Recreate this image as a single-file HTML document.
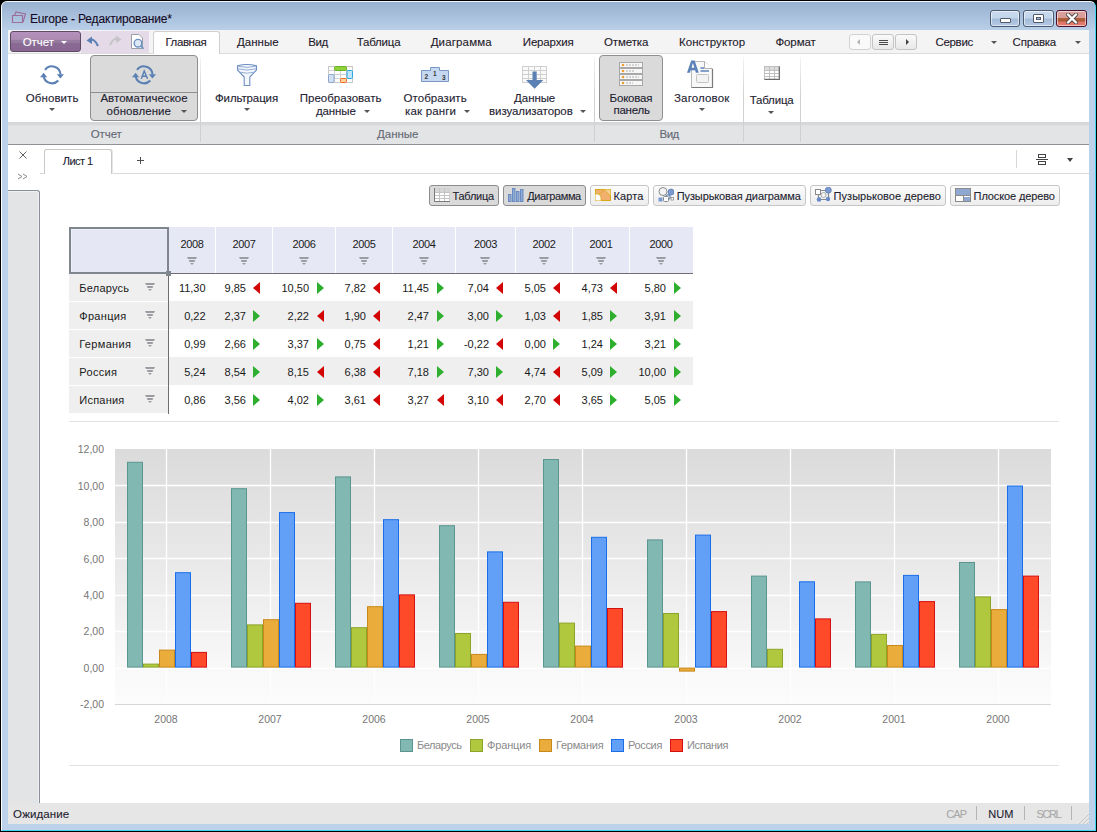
<!DOCTYPE html>
<html><head><meta charset="utf-8">
<style>
*{margin:0;padding:0;box-sizing:border-box}
html,body{width:1097px;height:832px;overflow:hidden;background:#000;font-family:"Liberation Sans",sans-serif;}
.a{position:absolute}
.t{position:absolute;white-space:nowrap;-webkit-text-stroke:0.1px currentColor}
.dd{position:absolute;width:0;height:0;border-left:3px solid transparent;border-right:3px solid transparent;border-top:3px solid #555}
.sep{position:absolute;width:1px;background:linear-gradient(rgba(210,211,213,0.25),#d0d1d3 45%,#cfd0d2)}
.pressed{position:absolute;background:#dadada;border:1px solid #8f8f8f;border-radius:4px}
.wb{position:absolute;top:10px;height:17px;border:1px solid #4b5a70;border-radius:3px;background:linear-gradient(#c9daef 0,#c3d5ec 48%,#a4bbd8 52%,#b3c9e4 100%);box-shadow:inset 0 0 0 1px rgba(255,255,255,.55)}
</style></head><body>
<div class="a" style="left:0;top:0;width:1097px;height:832px;background:#000"></div>
<div class="a" style="left:1px;top:1px;width:1095px;height:830px;background:#bcd1ea;border-radius:6px 6px 0 0;border-left:1px solid #fff;border-top:1px solid #f4f8fc;border-right:1px solid #3fd6ef;border-bottom:1px solid #3fd6ef"></div>
<div class="a" style="left:2px;top:2px;width:1093px;height:28px;background:linear-gradient(#98b1d0,#b9cfe8);border-radius:5px 5px 0 0"></div>

<svg class="a" style="left:11px;top:11px" width="16" height="13" viewBox="0 0 16 13"><path d="M1.5 4.5 L1.5 11.5 L11.5 11.5 L11.5 4.5 Z" fill="none" stroke="#9b6e9c" stroke-width="1.2"/><path d="M3.5 4.5 L5 1 L14.5 3 L12 11" fill="none" stroke="#9b6e9c" stroke-width="1.2"/></svg>
<div class="t" style="left:30.00px;top:13.00px;font-size:12px;line-height:12px;color:#140a24;letter-spacing:-0.152px">Europe - Редактирование*</div>
<div class="wb" style="left:990px;width:30px"></div>
<div class="a" style="left:1000px;top:18px;width:11px;height:5px;background:#fff;border:1px solid #505a68;border-radius:1px"></div>
<div class="wb" style="left:1023px;width:31px"></div>
<div class="a" style="left:1033px;top:14px;width:11px;height:9px;background:#fff;border:1px solid #505a68;border-radius:1px"></div>
<div class="a" style="left:1036px;top:17px;width:5px;height:3px;background:#a8bcd8;border:1px solid #505a68"></div>
<div class="wb" style="left:1056px;width:31px;border-color:#4a0f2a;background:linear-gradient(#dca39f 0,#d99b96 45%,#b0603a 50%,#a85a34 68%,#e07366 72%,#e47a6c 100%)"></div>
<svg class="a" style="left:1066px;top:13px" width="12" height="11" viewBox="0 0 12 11"><path d="M2 1.5 L10 9.5 M10 1.5 L2 9.5" stroke="#4a4a4a" stroke-width="4" stroke-linecap="round"/><path d="M2 1.5 L10 9.5 M10 1.5 L2 9.5" stroke="#fff" stroke-width="2.4" stroke-linecap="round"/></svg>
<div class="a" style="left:8px;top:30px;width:1081px;height:24px;background:#f4f4f4;border-bottom:1px solid #dcdcdc"></div>
<div class="a" style="left:10px;top:31px;width:71px;height:21px;border:1px solid #5e4a66;border-radius:3px;background:linear-gradient(#b592be 0,#ab8aaf 40%,#957aa0 45%,#957aa0 55%,#8a6a94 60%,#886892 100%)"></div>
<div class="t" style="left:22.70px;top:37.00px;font-size:11.5px;line-height:11.5px;color:#fff;letter-spacing:-0.057px">Отчет</div>
<div class="dd" style="left:61px;top:41px;border-top-color:#fff"></div>
<div class="a" style="left:81px;top:31px;width:68px;height:22px;background:#e4dae8"></div>
<svg class="a" style="left:86px;top:35px" width="14" height="13" viewBox="0 0 14 13"><path d="M3 5 Q8 2.5 12 11" fill="none" stroke="#5a7fb4" stroke-width="2"/><path d="M0.5 5.5 L6 1.5 L6 9 Z" fill="#5a7fb4"/></svg>
<svg class="a" style="left:108px;top:34px" width="14" height="13" viewBox="0 0 14 13"><path d="M11 5 Q6 2.5 2 11" fill="none" stroke="#c4c4c8" stroke-width="2"/><path d="M13.5 5.5 L8 1.5 L8 9 Z" fill="#c4c4c8"/></svg>
<svg class="a" style="left:130px;top:34px" width="14" height="16" viewBox="0 0 14 16"><path d="M1.5 0.5 L9 0.5 L12.5 4 L12.5 14.5 L1.5 14.5 Z" fill="#fff" stroke="#9aa0a8"/><circle cx="8" cy="9.2" r="3.8" fill="#dfe9f5" stroke="#6a90c4" stroke-width="1.4"/><path d="M10.7 11.9 L13.5 14.7" stroke="#6a90c4" stroke-width="1.6"/></svg>
<div class="a" style="left:153px;top:31px;width:67px;height:24px;background:#fff;border:1px solid #d0d0d0;border-bottom:none;border-radius:3px 3px 0 0"></div>
<div class="t" style="left:165.40px;top:37.00px;font-size:11.5px;line-height:11.5px;color:#1e1a2a;letter-spacing:-0.396px">Главная</div>
<div class="t" style="left:237.00px;top:37.00px;font-size:11.5px;line-height:11.5px;color:#1e1a2a;letter-spacing:0.009px">Данные</div>
<div class="t" style="left:308.20px;top:37.00px;font-size:11.5px;line-height:11.5px;color:#1e1a2a;letter-spacing:-0.335px">Вид</div>
<div class="t" style="left:356.80px;top:37.00px;font-size:11.5px;line-height:11.5px;color:#1e1a2a;letter-spacing:-0.227px">Таблица</div>
<div class="t" style="left:430.70px;top:37.00px;font-size:11.5px;line-height:11.5px;color:#1e1a2a;letter-spacing:0.144px">Диаграмма</div>
<div class="t" style="left:522.80px;top:37.00px;font-size:11.5px;line-height:11.5px;color:#1e1a2a;letter-spacing:-0.178px">Иерархия</div>
<div class="t" style="left:604.00px;top:37.00px;font-size:11.5px;line-height:11.5px;color:#1e1a2a;letter-spacing:-0.111px">Отметка</div>
<div class="t" style="left:678.90px;top:37.00px;font-size:11.5px;line-height:11.5px;color:#1e1a2a;letter-spacing:0.076px">Конструктор</div>
<div class="t" style="left:775.40px;top:37.00px;font-size:11.5px;line-height:11.5px;color:#1e1a2a;letter-spacing:-0.092px">Формат</div>
<div class="t" style="left:935.40px;top:37.00px;font-size:11.5px;line-height:11.5px;color:#1e1a2a;letter-spacing:-0.297px">Сервис</div>
<div class="t" style="left:1012.60px;top:37.00px;font-size:11.5px;line-height:11.5px;color:#1e1a2a;letter-spacing:-0.245px">Справка</div>
<div class="a" style="left:849px;top:34px;width:22px;height:16px;border:1px solid #d2d2d2;border-radius:3px;background:#fafafa"></div>
<div class="a" style="left:872px;top:34px;width:22px;height:16px;border:1px solid #c4c4c4;border-radius:3px;background:linear-gradient(#fafafa,#e8e8e8)"></div>
<div class="a" style="left:895px;top:34px;width:22px;height:16px;border:1px solid #c4c4c4;border-radius:3px;background:linear-gradient(#fafafa,#e8e8e8)"></div>
<div class="a" style="left:857px;top:39px;width:0;height:0;border-top:3px solid transparent;border-bottom:3px solid transparent;border-right:3px solid #b4b4b4"></div>
<div class="a" style="left:879px;top:40px;width:9px;height:1px;background:#484848;box-shadow:0 2px 0 #484848,0 4px 0 #484848"></div>
<div class="a" style="left:906px;top:39px;width:0;height:0;border-top:3px solid transparent;border-bottom:3px solid transparent;border-left:3px solid #404040"></div>
<div class="dd" style="left:991px;top:41px"></div>
<div class="dd" style="left:1075px;top:41px"></div>
<div class="a" style="left:8px;top:54px;width:1081px;height:68px;background:#fff"></div>
<div class="a" style="left:8px;top:122px;width:1081px;height:23px;background:linear-gradient(#d4d5d7 0,#d9dadc 3px,#e3e4e6 4px,#e3e4e6 100%);border-bottom:1px solid #8e9196"></div>
<div class="sep" style="left:200px;top:57px;height:85px"></div>
<div class="sep" style="left:594px;top:57px;height:85px"></div>
<div class="sep" style="left:743px;top:57px;height:85px"></div>
<div class="sep" style="left:800px;top:57px;height:85px"></div>
<div class="t" style="left:90.70px;top:129.00px;font-size:11.5px;line-height:11.5px;color:#646874;letter-spacing:-0.077px">Отчет</div>
<div class="t" style="left:377.10px;top:129.00px;font-size:11.5px;line-height:11.5px;color:#646874;letter-spacing:-0.041px">Данные</div>
<div class="t" style="left:659.60px;top:129.00px;font-size:11.5px;line-height:11.5px;color:#646874;letter-spacing:-0.535px">Вид</div>
<svg class="a" style="left:40px;top:64px" width="24" height="22" viewBox="0 0 24 22">
<path d="M5.04 5.92 A8.5 8.5 0 0 1 20.5 10.5" fill="none" stroke="#5a80b4" stroke-width="2.1"/>
<path d="M16.8 10.2 L24 10.2 L20.4 14.6 Z" fill="#5a80b4"/>
<path d="M18.3 16.5 A8.5 8.5 0 0 1 3.74 12.8" fill="none" stroke="#5a80b4" stroke-width="2.1"/>
<path d="M0 13.2 L7.2 13.2 L3.6 8.8 Z" fill="#5a80b4"/></svg>
<div class="t" style="left:25.70px;top:93.00px;font-size:11.5px;line-height:11.5px;color:#222230;letter-spacing:0.104px">Обновить</div>
<div class="dd" style="left:49px;top:108px"></div>
<div class="pressed" style="left:90px;top:55px;width:108px;height:66px"></div>
<div class="a" style="left:91px;top:92px;width:106px;height:1px;background:#8f8f8f"></div>
<svg class="a" style="left:132px;top:64px" width="24" height="22" viewBox="0 0 24 22">
<path d="M5.04 5.92 A8.5 8.5 0 0 1 20.5 10.5" fill="none" stroke="#5a80b4" stroke-width="2.1"/>
<path d="M16.8 10.2 L24 10.2 L20.4 14.6 Z" fill="#5a80b4"/>
<path d="M18.3 16.5 A8.5 8.5 0 0 1 3.74 12.8" fill="none" stroke="#5a80b4" stroke-width="2.1"/>
<path d="M0 13.2 L7.2 13.2 L3.6 8.8 Z" fill="#5a80b4"/>
<path d="M9.3 14.8 L12.2 7 L15.5 14.8 M10.3 12.2 H14.5" fill="none" stroke="#5a80b4" stroke-width="1.5"/></svg>
<div class="t" style="left:100.40px;top:93.00px;font-size:11.5px;line-height:11.5px;color:#222230;letter-spacing:0.029px">Автоматическое</div>
<div class="t" style="left:106.60px;top:106.00px;font-size:11.5px;line-height:11.5px;color:#222230;letter-spacing:0.055px">обновление</div>
<div class="dd" style="left:181px;top:110px"></div>
<svg class="a" style="left:236px;top:63px" width="22" height="24" viewBox="0 0 22 24">
<path d="M1.5 2.8 Q11 0.2 20.5 2.8 V7 L13.8 14 V22.5 H8.2 V14 L1.5 7 Z" fill="#f4f7fc" stroke="#6d8fc2" stroke-width="1.1"/>
<path d="M1.8 3.2 Q11 5.6 20.2 3.2 M2 5.8 Q11 8.4 20 5.8 M4.2 9.2 Q11 11.2 17.8 9.2" fill="none" stroke="#8aa6d0" stroke-width="0.9"/>
</svg>
<div class="t" style="left:215.00px;top:93.00px;font-size:11.5px;line-height:11.5px;color:#222230;letter-spacing:-0.127px">Фильтрация</div>
<div class="dd" style="left:244px;top:108px"></div>
<svg class="a" style="left:328px;top:66px" width="26" height="17" viewBox="0 0 26 17">
<rect x="0.5" y="0.5" width="24" height="16" fill="#fff" stroke="#c8c8c8"/>
<path d="M6.5 0.5 V16.5 M12.5 0.5 V16.5 M18.5 0.5 V16.5 M0.5 4.5 H24.5 M0.5 8.5 H24.5 M0.5 12.5 H24.5" stroke="#d0d0d0" stroke-width="1"/>
<rect x="6.5" y="0.5" width="12" height="4" rx="1" fill="#8fd23a" stroke="#6cb02a"/>
<rect x="19" y="4.5" width="5.5" height="8" rx="1" fill="#bfe6fa" stroke="#2aa6e0"/>
<rect x="0.5" y="8.5" width="5.5" height="8" rx="1" fill="#d2e0f2" stroke="#8aa6cc"/>
<rect x="12.5" y="12.5" width="6" height="4" rx="1" fill="#fbd3a0" stroke="#f06a20"/></svg>
<div class="t" style="left:299.70px;top:93.00px;font-size:11.5px;line-height:11.5px;color:#222230;letter-spacing:0.014px">Преобразовать</div>
<div class="t" style="left:315.90px;top:106.00px;font-size:11.5px;line-height:11.5px;color:#222230;letter-spacing:-0.111px">данные</div>
<div class="dd" style="left:364px;top:110px"></div>
<svg class="a" style="left:421px;top:67px" width="28" height="15" viewBox="0 0 28 15">
<path d="M0.5 3.5 H9.5 V0.5 H18.5 V3.5 H27.5 V14.5 H0.5 Z" fill="#c6d8f0" stroke="#7a98c4"/>
<text x="3.5" y="12" font-family="Liberation Sans" font-weight="bold" font-size="6.5" fill="#3a3a3a">2</text>
<text x="12" y="8.5" font-family="Liberation Sans" font-weight="bold" font-size="6.5" fill="#3a3a3a">1</text>
<text x="21" y="13" font-family="Liberation Sans" font-weight="bold" font-size="6.5" fill="#3a3a3a">3</text></svg>
<div class="t" style="left:403.60px;top:93.00px;font-size:11.5px;line-height:11.5px;color:#222230;letter-spacing:0.042px">Отобразить</div>
<div class="t" style="left:405.10px;top:106.00px;font-size:11.5px;line-height:11.5px;color:#222230;letter-spacing:0.159px">как ранги</div>
<div class="dd" style="left:464px;top:110px"></div>
<svg class="a" style="left:522px;top:66px" width="25" height="23" viewBox="0 0 25 23">
<rect x="0.5" y="0.5" width="24" height="16" fill="#fafafa" stroke="#cfcfcf"/>
<path d="M6.5 0.5 V16.5 M12.5 0.5 V16.5 M18.5 0.5 V16.5 M0.5 4.5 H24.5 M0.5 8.5 H24.5 M0.5 12.5 H24.5" stroke="#cfcfcf" stroke-width="1"/>
<path d="M10.5 5.5 H14.7 V14 H21.3 L12.6 22.8 L4 14 H10.5 Z" fill="#5a80b4"/></svg>
<div class="t" style="left:514.10px;top:93.00px;font-size:11.5px;line-height:11.5px;color:#222230;letter-spacing:-0.075px">Данные</div>
<div class="t" style="left:489.00px;top:106.00px;font-size:11.5px;line-height:11.5px;color:#222230;letter-spacing:-0.070px">визуализаторов</div>
<div class="dd" style="left:580px;top:110px"></div>
<div class="pressed" style="left:599px;top:55px;width:64px;height:66px"></div>
<svg class="a" style="left:619px;top:62px" width="25" height="25" viewBox="0 0 25 25">
<g fill="#f6f6f6" stroke="#a8a8a8"><rect x="0.5" y="0.5" width="23" height="5"/><rect x="0.5" y="6.5" width="23" height="5"/><rect x="0.5" y="12.5" width="23" height="5"/><rect x="0.5" y="18.5" width="23" height="5"/></g>
<g fill="#f0a030"><circle cx="4" cy="3" r="1.3"/><circle cx="4" cy="9" r="1.3"/><circle cx="4" cy="15" r="1.3"/><circle cx="4" cy="21" r="1.3"/></g>
<g stroke="#b0b0b0" stroke-dasharray="2 1"><path d="M7 3 H20"/><path d="M7 9 H16"/><path d="M7 15 H20"/><path d="M7 21 H14"/></g></svg>
<div class="t" style="left:609.60px;top:93.00px;font-size:11.5px;line-height:11.5px;color:#222230;letter-spacing:-0.200px">Боковая</div>
<div class="t" style="left:613.40px;top:105.00px;font-size:11.5px;line-height:11.5px;color:#222230;letter-spacing:-0.215px">панель</div>
<svg class="a" style="left:686px;top:60px" width="28" height="29" viewBox="0 0 28 29">
<path d="M5.5 1.5 H18.5 L26.5 9 V27.5 H5.5 Z" fill="#f8f8f8" stroke="#b8b8b8"/>
<path d="M26.5 9 V27.5 H5.5" fill="none" stroke="#7a7a7a" stroke-width="1.2"/>
<path d="M18.5 1.5 V8.5 H26.5" fill="#fff" stroke="#b0b0b0"/>
<rect x="10.5" y="14.5" width="12" height="8" rx="1" fill="#f2f2f2" stroke="#c4c4c4"/>
<path fill-rule="evenodd" d="M1 12.8 L5.2 0.4 H8.6 L12.8 12.8 H9.9 L9.1 10.2 H4.7 L3.9 12.8 Z M5.4 7.8 H8.4 L6.9 3 Z" fill="#5b82b8"/>
<path d="M14.5 8 H18 M14.5 11 H23" stroke="#5b82b8" stroke-width="1.5"/></svg>
<div class="t" style="left:674.00px;top:93.00px;font-size:11.5px;line-height:11.5px;color:#222230;letter-spacing:0.159px">Заголовок</div>
<div class="dd" style="left:699px;top:108px"></div>
<svg class="a" style="left:764px;top:66px" width="16" height="14" viewBox="0 0 16 14">
<rect x="0.5" y="0.5" width="15" height="13" fill="#fff" stroke="#c0c0c0"/>
<rect x="1" y="1" width="14" height="3.5" fill="#dcdcdc"/>
<path d="M5.5 0.5 V13.5 M10.5 0.5 V13.5 M0.5 4.5 H15.5 M0.5 7.5 H15.5 M0.5 10.5 H15.5" stroke="#c0c0c0"/>
<path d="M15.3 0.5 V13.3 H0.5" fill="none" stroke="#6a6a6a" stroke-width="1.2"/></svg>
<div class="t" style="left:749.70px;top:95.00px;font-size:11.5px;line-height:11.5px;color:#222230;letter-spacing:-0.184px">Таблица</div>
<div class="dd" style="left:768px;top:111px"></div>
<div class="a" style="left:8px;top:145px;width:1081px;height:658px;background:#fff"></div>
<div class="a" style="left:40px;top:173px;width:1049px;height:1px;background:#d9d9d9"></div>
<div class="a" style="left:44px;top:149px;width:68px;height:25px;background:#fff;border:1px solid #c8c8c8;border-bottom:none;border-radius:3px 3px 0 0;box-shadow:1px 0 0 #e6e6e6"></div>
<div class="t" style="left:62.70px;top:156.00px;font-size:11px;line-height:11px;color:#1e1e30;letter-spacing:-0.529px">Лист 1</div>
<svg class="a" style="left:137px;top:157px" width="8" height="8" viewBox="0 0 8 8"><path d="M0 3.5 H7 M3.5 0 V7" stroke="#505050" stroke-width="1"/></svg>
<svg class="a" style="left:19px;top:151px" width="8" height="8" viewBox="0 0 8 8"><path d="M0.5 0.5 L7.5 7.5 M7.5 0.5 L0.5 7.5" stroke="#606060" stroke-width="1"/></svg>
<svg class="a" style="left:17px;top:173px" width="12" height="7" viewBox="0 0 12 7"><path d="M1 1 L5 3.5 L1 6 M6 1 L10 3.5 L6 6" fill="none" stroke="#8a8a8a" stroke-width="1"/></svg>
<div class="a" style="left:1016px;top:150px;width:1px;height:18px;background:#d8d8d8"></div>
<svg class="a" style="left:1036px;top:154px" width="12" height="11" viewBox="0 0 12 11"><rect x="2.5" y="0.5" width="7" height="3" fill="none" stroke="#444"/><rect x="2.5" y="7.5" width="7" height="3" fill="none" stroke="#444"/><path d="M0 5.5 H12" stroke="#444"/></svg>
<div class="a" style="left:1067px;top:158px;border-left:3px solid transparent;border-right:3px solid transparent;border-top:4px solid #444"></div>
<div class="a" style="left:8px;top:190px;width:32px;height:613px;background:#e3e4e6;border-right:1px solid #8a8e96;border-top:1px solid #8a8e96;border-radius:0 3px 0 0;box-shadow:inset -1px 1px 0 #eff0f2"></div>
<div class="a" style="left:429px;top:185px;width:70px;height:21px;background:#dadada;border:1px solid #8c8c8c;border-radius:3px"></div>
<div class="a" style="left:503px;top:185px;width:83px;height:21px;background:#dadada;border:1px solid #8c8c8c;border-radius:3px"></div>
<div class="a" style="left:590px;top:185px;width:59px;height:21px;background:linear-gradient(#fbfbfb,#ededed);border:1px solid #c6c6c6;border-radius:3px"></div>
<div class="a" style="left:653px;top:185px;width:153px;height:21px;background:linear-gradient(#fbfbfb,#ededed);border:1px solid #c6c6c6;border-radius:3px"></div>
<div class="a" style="left:810px;top:185px;width:136px;height:21px;background:linear-gradient(#fbfbfb,#ededed);border:1px solid #c6c6c6;border-radius:3px"></div>
<div class="a" style="left:950px;top:185px;width:110px;height:21px;background:linear-gradient(#fbfbfb,#ededed);border:1px solid #c6c6c6;border-radius:3px"></div>
<svg class="a" style="left:434px;top:188px" width="16" height="14" viewBox="0 0 16 14"><rect x="0.5" y="0.5" width="15" height="13" fill="#fff" stroke="#cfcfcf"/><rect x="1" y="1" width="14" height="3" fill="#d6d6d6"/><path d="M5.5 0.5 V13.5 M10.5 0.5 V13.5 M0.5 4.5 H15.5 M0.5 7.5 H15.5 M0.5 10.5 H15.5" stroke="#c4c4c4"/><path d="M0.5 0 V13.5 H16" fill="none" stroke="#7a7a7a"/></svg>
<svg class="a" style="left:508px;top:188px" width="16" height="14" viewBox="0 0 16 14"><g fill="#8eaad6" stroke="#6a8cc0"><rect x="0.5" y="6.5" width="2.5" height="7"/><rect x="4.5" y="0.5" width="2.5" height="13"/><rect x="8.5" y="3.5" width="2.5" height="10"/><rect x="12.5" y="1.5" width="2.5" height="12"/></g></svg>
<svg class="a" style="left:595px;top:189px" width="16" height="12" viewBox="0 0 16 12"><rect x="0.5" y="0.5" width="15" height="11" fill="#f2b06e" stroke="#d8a818"/><path d="M9 0.5 L15.5 0.5 L15.5 7 L12 3.5 Z" fill="#f6d090"/><path d="M0.5 5 L4 5 L6 8 L6 11.5 L0.5 11.5 Z" fill="#fff"/><path d="M0.5 5 L4 5 L7 3 L9 0.5 M6 11.5 L6 8 L4 5 M9 0.5 L12 3.5 L15.5 7" fill="none" stroke="#d8a818" stroke-width="0.8"/></svg>
<svg class="a" style="left:658px;top:187px" width="16" height="15" viewBox="0 0 16 15"><circle cx="5" cy="4.5" r="4" fill="#f4f4f4" stroke="#8a8a8a"/><circle cx="13" cy="5" r="3" fill="#7a9ad0" stroke="#5a7ab0" stroke-width="0.8"/><rect x="0.5" y="10.5" width="4" height="4" fill="#7a9ad0"/><circle cx="10" cy="10" r="2.2" fill="none" stroke="#6a8ac0" stroke-width="1.2"/><rect x="5.5" y="9.5" width="5" height="5" rx="1" fill="#fff" stroke="#8a8a8a"/><rect x="13" y="10.5" width="2.5" height="2.5" fill="#fff" stroke="#8a8a8a" stroke-width="0.8"/></svg>
<svg class="a" style="left:815px;top:187px" width="17" height="15" viewBox="0 0 17 15"><rect x="3.5" y="3.5" width="10" height="9" rx="2.5" fill="none" stroke="#8a8a8a" stroke-width="1.2"/><circle cx="8.5" cy="8" r="2.5" fill="none" stroke="#aaa"/><rect x="0.5" y="2.5" width="5" height="5" fill="#fff" stroke="#8a8a8a"/><circle cx="13.3" cy="3.2" r="3" fill="#7a9ad0" stroke="#5a7ab0" stroke-width="0.8"/><circle cx="4" cy="12.5" r="2.3" fill="#6a8ac8"/><circle cx="13" cy="12" r="2.2" fill="#6a8ac8"/></svg>
<svg class="a" style="left:955px;top:188px" width="16" height="14" viewBox="0 0 16 14"><rect x="0.5" y="0.5" width="15" height="13" fill="#fff" stroke="#8a8a8a"/><rect x="1" y="1" width="14" height="6" fill="#8ea8d2"/><rect x="9" y="9" width="6" height="4" fill="#8ea8d2"/><path d="M0.5 7.5 H15.5 M8.5 7.5 V13.5" stroke="#8a8a8a"/></svg>
<div class="t" style="left:452.40px;top:191.00px;font-size:11px;line-height:11px;color:#1e1e30;letter-spacing:-0.219px">Таблица</div>
<div class="t" style="left:527.20px;top:191.00px;font-size:11px;line-height:11px;color:#1e1e30;letter-spacing:-0.400px">Диаграмма</div>
<div class="t" style="left:613.60px;top:191.00px;font-size:11px;line-height:11px;color:#1e1e30;letter-spacing:0.113px">Карта</div>
<div class="t" style="left:676.70px;top:191.00px;font-size:11px;line-height:11px;color:#1e1e30;letter-spacing:-0.104px">Пузырьковая диаграмма</div>
<div class="t" style="left:833.60px;top:191.00px;font-size:11px;line-height:11px;color:#1e1e30;letter-spacing:0.029px">Пузырьковое дерево</div>
<div class="t" style="left:973.60px;top:191.00px;font-size:11px;line-height:11px;color:#1e1e30;letter-spacing:-0.122px">Плоское дерево</div>
<div class="a" style="left:169px;top:227px;width:524px;height:46px;background:#e6e8f5"></div>
<div class="a" style="left:215px;top:227px;width:1px;height:46px;background:#fff"></div>
<div class="a" style="left:272px;top:227px;width:1px;height:46px;background:#fff"></div>
<div class="a" style="left:335px;top:227px;width:1px;height:46px;background:#fff"></div>
<div class="a" style="left:392px;top:227px;width:1px;height:46px;background:#fff"></div>
<div class="a" style="left:455px;top:227px;width:1px;height:46px;background:#fff"></div>
<div class="a" style="left:515px;top:227px;width:1px;height:46px;background:#fff"></div>
<div class="a" style="left:572px;top:227px;width:1px;height:46px;background:#fff"></div>
<div class="a" style="left:629px;top:227px;width:1px;height:46px;background:#fff"></div>
<div class="t" style="left:180.40px;top:239.00px;font-size:11px;line-height:11px;color:#1a1a1a;letter-spacing:-0.318px;-webkit-text-stroke:0">2008</div>
<svg class="a" style="left:187px;top:257px" width="10" height="8" viewBox="0 0 10 8"><path d="M0 0 H10 L9 2 H1 Z M2 3 H8 L7.6 5 H2.4 Z M3 6 H7 L5 8 Z" fill="#9a9ca2"/></svg>
<div class="t" style="left:232.40px;top:239.00px;font-size:11px;line-height:11px;color:#1a1a1a;letter-spacing:-0.318px;-webkit-text-stroke:0">2007</div>
<svg class="a" style="left:239px;top:257px" width="10" height="8" viewBox="0 0 10 8"><path d="M0 0 H10 L9 2 H1 Z M2 3 H8 L7.6 5 H2.4 Z M3 6 H7 L5 8 Z" fill="#9a9ca2"/></svg>
<div class="t" style="left:292.40px;top:239.00px;font-size:11px;line-height:11px;color:#1a1a1a;letter-spacing:-0.318px;-webkit-text-stroke:0">2006</div>
<svg class="a" style="left:299px;top:257px" width="10" height="8" viewBox="0 0 10 8"><path d="M0 0 H10 L9 2 H1 Z M2 3 H8 L7.6 5 H2.4 Z M3 6 H7 L5 8 Z" fill="#9a9ca2"/></svg>
<div class="t" style="left:352.40px;top:239.00px;font-size:11px;line-height:11px;color:#1a1a1a;letter-spacing:-0.318px;-webkit-text-stroke:0">2005</div>
<svg class="a" style="left:359px;top:257px" width="10" height="8" viewBox="0 0 10 8"><path d="M0 0 H10 L9 2 H1 Z M2 3 H8 L7.6 5 H2.4 Z M3 6 H7 L5 8 Z" fill="#9a9ca2"/></svg>
<div class="t" style="left:412.40px;top:239.00px;font-size:11px;line-height:11px;color:#1a1a1a;letter-spacing:-0.318px;-webkit-text-stroke:0">2004</div>
<svg class="a" style="left:419px;top:257px" width="10" height="8" viewBox="0 0 10 8"><path d="M0 0 H10 L9 2 H1 Z M2 3 H8 L7.6 5 H2.4 Z M3 6 H7 L5 8 Z" fill="#9a9ca2"/></svg>
<div class="t" style="left:473.90px;top:239.00px;font-size:11px;line-height:11px;color:#1a1a1a;letter-spacing:-0.318px;-webkit-text-stroke:0">2003</div>
<svg class="a" style="left:480px;top:257px" width="10" height="8" viewBox="0 0 10 8"><path d="M0 0 H10 L9 2 H1 Z M2 3 H8 L7.6 5 H2.4 Z M3 6 H7 L5 8 Z" fill="#9a9ca2"/></svg>
<div class="t" style="left:532.40px;top:239.00px;font-size:11px;line-height:11px;color:#1a1a1a;letter-spacing:-0.318px;-webkit-text-stroke:0">2002</div>
<svg class="a" style="left:539px;top:257px" width="10" height="8" viewBox="0 0 10 8"><path d="M0 0 H10 L9 2 H1 Z M2 3 H8 L7.6 5 H2.4 Z M3 6 H7 L5 8 Z" fill="#9a9ca2"/></svg>
<div class="t" style="left:589.40px;top:239.00px;font-size:11px;line-height:11px;color:#1a1a1a;letter-spacing:-0.318px;-webkit-text-stroke:0">2001</div>
<svg class="a" style="left:596px;top:257px" width="10" height="8" viewBox="0 0 10 8"><path d="M0 0 H10 L9 2 H1 Z M2 3 H8 L7.6 5 H2.4 Z M3 6 H7 L5 8 Z" fill="#9a9ca2"/></svg>
<div class="t" style="left:649.40px;top:239.00px;font-size:11px;line-height:11px;color:#1a1a1a;letter-spacing:-0.318px;-webkit-text-stroke:0">2000</div>
<svg class="a" style="left:656px;top:257px" width="10" height="8" viewBox="0 0 10 8"><path d="M0 0 H10 L9 2 H1 Z M2 3 H8 L7.6 5 H2.4 Z M3 6 H7 L5 8 Z" fill="#9a9ca2"/></svg>
<div class="a" style="left:69px;top:274px;width:99px;height:27px;background:#efefef"></div>
<div class="t" style="left:79.30px;top:283.00px;font-size:11px;line-height:11px;color:#1a1a1a;letter-spacing:0.236px;-webkit-text-stroke:0">Беларусь</div>
<svg class="a" style="left:145px;top:283px" width="10" height="8" viewBox="0 0 10 8"><path d="M0 0 H10 L9 2 H1 Z M2 3 H8 L7.6 5 H2.4 Z M3 6 H7 L5 8 Z" fill="#9a9ca2"/></svg>
<div class="t" style="left:145.6px;width:60px;text-align:right;top:283.00px;font-size:11px;line-height:11px;color:#1a1a1a;-webkit-text-stroke:0">11,30</div>
<div class="t" style="left:186.0px;width:60px;text-align:right;top:283.00px;font-size:11px;line-height:11px;color:#1a1a1a;-webkit-text-stroke:0">9,85</div>
<svg class="a" style="left:253px;top:282px" width="7" height="12" viewBox="0 0 7 12"><path d="M7 0 L0 6 L7 12 Z" fill="#d20404"/></svg>
<div class="t" style="left:249.0px;width:60px;text-align:right;top:283.00px;font-size:11px;line-height:11px;color:#1a1a1a;-webkit-text-stroke:0">10,50</div>
<svg class="a" style="left:317px;top:282px" width="7" height="12" viewBox="0 0 7 12"><path d="M0 0 L7 6 L0 12 Z" fill="#2eb02e"/></svg>
<div class="t" style="left:306.0px;width:60px;text-align:right;top:283.00px;font-size:11px;line-height:11px;color:#1a1a1a;-webkit-text-stroke:0">7,82</div>
<svg class="a" style="left:373px;top:282px" width="7" height="12" viewBox="0 0 7 12"><path d="M7 0 L0 6 L7 12 Z" fill="#d20404"/></svg>
<div class="t" style="left:369.0px;width:60px;text-align:right;top:283.00px;font-size:11px;line-height:11px;color:#1a1a1a;-webkit-text-stroke:0">11,45</div>
<svg class="a" style="left:437px;top:282px" width="7" height="12" viewBox="0 0 7 12"><path d="M0 0 L7 6 L0 12 Z" fill="#2eb02e"/></svg>
<div class="t" style="left:429.0px;width:60px;text-align:right;top:283.00px;font-size:11px;line-height:11px;color:#1a1a1a;-webkit-text-stroke:0">7,04</div>
<svg class="a" style="left:496px;top:282px" width="7" height="12" viewBox="0 0 7 12"><path d="M7 0 L0 6 L7 12 Z" fill="#d20404"/></svg>
<div class="t" style="left:486.0px;width:60px;text-align:right;top:283.00px;font-size:11px;line-height:11px;color:#1a1a1a;-webkit-text-stroke:0">5,05</div>
<svg class="a" style="left:553px;top:282px" width="7" height="12" viewBox="0 0 7 12"><path d="M7 0 L0 6 L7 12 Z" fill="#d20404"/></svg>
<div class="t" style="left:543.0px;width:60px;text-align:right;top:283.00px;font-size:11px;line-height:11px;color:#1a1a1a;-webkit-text-stroke:0">4,73</div>
<svg class="a" style="left:610px;top:282px" width="7" height="12" viewBox="0 0 7 12"><path d="M7 0 L0 6 L7 12 Z" fill="#d20404"/></svg>
<div class="t" style="left:606.0px;width:60px;text-align:right;top:283.00px;font-size:11px;line-height:11px;color:#1a1a1a;-webkit-text-stroke:0">5,80</div>
<svg class="a" style="left:674px;top:282px" width="7" height="12" viewBox="0 0 7 12"><path d="M0 0 L7 6 L0 12 Z" fill="#2eb02e"/></svg>
<div class="a" style="left:69px;top:302px;width:99px;height:27px;background:#efefef"></div>
<div class="a" style="left:169px;top:301px;width:524px;height:28px;background:#efefef"></div>
<div class="t" style="left:79.30px;top:311.00px;font-size:11px;line-height:11px;color:#1a1a1a;letter-spacing:0.289px;-webkit-text-stroke:0">Франция</div>
<svg class="a" style="left:145px;top:311px" width="10" height="8" viewBox="0 0 10 8"><path d="M0 0 H10 L9 2 H1 Z M2 3 H8 L7.6 5 H2.4 Z M3 6 H7 L5 8 Z" fill="#9a9ca2"/></svg>
<div class="t" style="left:145.6px;width:60px;text-align:right;top:311.00px;font-size:11px;line-height:11px;color:#1a1a1a;-webkit-text-stroke:0">0,22</div>
<div class="t" style="left:186.0px;width:60px;text-align:right;top:311.00px;font-size:11px;line-height:11px;color:#1a1a1a;-webkit-text-stroke:0">2,37</div>
<svg class="a" style="left:253px;top:310px" width="7" height="12" viewBox="0 0 7 12"><path d="M0 0 L7 6 L0 12 Z" fill="#2eb02e"/></svg>
<div class="t" style="left:249.0px;width:60px;text-align:right;top:311.00px;font-size:11px;line-height:11px;color:#1a1a1a;-webkit-text-stroke:0">2,22</div>
<svg class="a" style="left:317px;top:310px" width="7" height="12" viewBox="0 0 7 12"><path d="M7 0 L0 6 L7 12 Z" fill="#d20404"/></svg>
<div class="t" style="left:306.0px;width:60px;text-align:right;top:311.00px;font-size:11px;line-height:11px;color:#1a1a1a;-webkit-text-stroke:0">1,90</div>
<svg class="a" style="left:373px;top:310px" width="7" height="12" viewBox="0 0 7 12"><path d="M7 0 L0 6 L7 12 Z" fill="#d20404"/></svg>
<div class="t" style="left:369.0px;width:60px;text-align:right;top:311.00px;font-size:11px;line-height:11px;color:#1a1a1a;-webkit-text-stroke:0">2,47</div>
<svg class="a" style="left:437px;top:310px" width="7" height="12" viewBox="0 0 7 12"><path d="M0 0 L7 6 L0 12 Z" fill="#2eb02e"/></svg>
<div class="t" style="left:429.0px;width:60px;text-align:right;top:311.00px;font-size:11px;line-height:11px;color:#1a1a1a;-webkit-text-stroke:0">3,00</div>
<svg class="a" style="left:496px;top:310px" width="7" height="12" viewBox="0 0 7 12"><path d="M0 0 L7 6 L0 12 Z" fill="#2eb02e"/></svg>
<div class="t" style="left:486.0px;width:60px;text-align:right;top:311.00px;font-size:11px;line-height:11px;color:#1a1a1a;-webkit-text-stroke:0">1,03</div>
<svg class="a" style="left:553px;top:310px" width="7" height="12" viewBox="0 0 7 12"><path d="M7 0 L0 6 L7 12 Z" fill="#d20404"/></svg>
<div class="t" style="left:543.0px;width:60px;text-align:right;top:311.00px;font-size:11px;line-height:11px;color:#1a1a1a;-webkit-text-stroke:0">1,85</div>
<svg class="a" style="left:610px;top:310px" width="7" height="12" viewBox="0 0 7 12"><path d="M0 0 L7 6 L0 12 Z" fill="#2eb02e"/></svg>
<div class="t" style="left:606.0px;width:60px;text-align:right;top:311.00px;font-size:11px;line-height:11px;color:#1a1a1a;-webkit-text-stroke:0">3,91</div>
<svg class="a" style="left:674px;top:310px" width="7" height="12" viewBox="0 0 7 12"><path d="M0 0 L7 6 L0 12 Z" fill="#2eb02e"/></svg>
<div class="a" style="left:69px;top:330px;width:99px;height:27px;background:#efefef"></div>
<div class="t" style="left:79.30px;top:339.00px;font-size:11px;line-height:11px;color:#1a1a1a;letter-spacing:0.336px;-webkit-text-stroke:0">Германия</div>
<svg class="a" style="left:145px;top:339px" width="10" height="8" viewBox="0 0 10 8"><path d="M0 0 H10 L9 2 H1 Z M2 3 H8 L7.6 5 H2.4 Z M3 6 H7 L5 8 Z" fill="#9a9ca2"/></svg>
<div class="t" style="left:145.6px;width:60px;text-align:right;top:339.00px;font-size:11px;line-height:11px;color:#1a1a1a;-webkit-text-stroke:0">0,99</div>
<div class="t" style="left:186.0px;width:60px;text-align:right;top:339.00px;font-size:11px;line-height:11px;color:#1a1a1a;-webkit-text-stroke:0">2,66</div>
<svg class="a" style="left:253px;top:338px" width="7" height="12" viewBox="0 0 7 12"><path d="M0 0 L7 6 L0 12 Z" fill="#2eb02e"/></svg>
<div class="t" style="left:249.0px;width:60px;text-align:right;top:339.00px;font-size:11px;line-height:11px;color:#1a1a1a;-webkit-text-stroke:0">3,37</div>
<svg class="a" style="left:317px;top:338px" width="7" height="12" viewBox="0 0 7 12"><path d="M0 0 L7 6 L0 12 Z" fill="#2eb02e"/></svg>
<div class="t" style="left:306.0px;width:60px;text-align:right;top:339.00px;font-size:11px;line-height:11px;color:#1a1a1a;-webkit-text-stroke:0">0,75</div>
<svg class="a" style="left:373px;top:338px" width="7" height="12" viewBox="0 0 7 12"><path d="M7 0 L0 6 L7 12 Z" fill="#d20404"/></svg>
<div class="t" style="left:369.0px;width:60px;text-align:right;top:339.00px;font-size:11px;line-height:11px;color:#1a1a1a;-webkit-text-stroke:0">1,21</div>
<svg class="a" style="left:437px;top:338px" width="7" height="12" viewBox="0 0 7 12"><path d="M0 0 L7 6 L0 12 Z" fill="#2eb02e"/></svg>
<div class="t" style="left:429.0px;width:60px;text-align:right;top:339.00px;font-size:11px;line-height:11px;color:#1a1a1a;-webkit-text-stroke:0">-0,22</div>
<svg class="a" style="left:496px;top:338px" width="7" height="12" viewBox="0 0 7 12"><path d="M7 0 L0 6 L7 12 Z" fill="#d20404"/></svg>
<div class="t" style="left:486.0px;width:60px;text-align:right;top:339.00px;font-size:11px;line-height:11px;color:#1a1a1a;-webkit-text-stroke:0">0,00</div>
<svg class="a" style="left:553px;top:338px" width="7" height="12" viewBox="0 0 7 12"><path d="M0 0 L7 6 L0 12 Z" fill="#2eb02e"/></svg>
<div class="t" style="left:543.0px;width:60px;text-align:right;top:339.00px;font-size:11px;line-height:11px;color:#1a1a1a;-webkit-text-stroke:0">1,24</div>
<svg class="a" style="left:610px;top:338px" width="7" height="12" viewBox="0 0 7 12"><path d="M0 0 L7 6 L0 12 Z" fill="#2eb02e"/></svg>
<div class="t" style="left:606.0px;width:60px;text-align:right;top:339.00px;font-size:11px;line-height:11px;color:#1a1a1a;-webkit-text-stroke:0">3,21</div>
<svg class="a" style="left:674px;top:338px" width="7" height="12" viewBox="0 0 7 12"><path d="M0 0 L7 6 L0 12 Z" fill="#2eb02e"/></svg>
<div class="a" style="left:69px;top:358px;width:99px;height:27px;background:#efefef"></div>
<div class="a" style="left:169px;top:357px;width:524px;height:28px;background:#efefef"></div>
<div class="t" style="left:79.30px;top:367.00px;font-size:11px;line-height:11px;color:#1a1a1a;letter-spacing:0.338px;-webkit-text-stroke:0">Россия</div>
<svg class="a" style="left:145px;top:367px" width="10" height="8" viewBox="0 0 10 8"><path d="M0 0 H10 L9 2 H1 Z M2 3 H8 L7.6 5 H2.4 Z M3 6 H7 L5 8 Z" fill="#9a9ca2"/></svg>
<div class="t" style="left:145.6px;width:60px;text-align:right;top:367.00px;font-size:11px;line-height:11px;color:#1a1a1a;-webkit-text-stroke:0">5,24</div>
<div class="t" style="left:186.0px;width:60px;text-align:right;top:367.00px;font-size:11px;line-height:11px;color:#1a1a1a;-webkit-text-stroke:0">8,54</div>
<svg class="a" style="left:253px;top:366px" width="7" height="12" viewBox="0 0 7 12"><path d="M0 0 L7 6 L0 12 Z" fill="#2eb02e"/></svg>
<div class="t" style="left:249.0px;width:60px;text-align:right;top:367.00px;font-size:11px;line-height:11px;color:#1a1a1a;-webkit-text-stroke:0">8,15</div>
<svg class="a" style="left:317px;top:366px" width="7" height="12" viewBox="0 0 7 12"><path d="M7 0 L0 6 L7 12 Z" fill="#d20404"/></svg>
<div class="t" style="left:306.0px;width:60px;text-align:right;top:367.00px;font-size:11px;line-height:11px;color:#1a1a1a;-webkit-text-stroke:0">6,38</div>
<svg class="a" style="left:373px;top:366px" width="7" height="12" viewBox="0 0 7 12"><path d="M7 0 L0 6 L7 12 Z" fill="#d20404"/></svg>
<div class="t" style="left:369.0px;width:60px;text-align:right;top:367.00px;font-size:11px;line-height:11px;color:#1a1a1a;-webkit-text-stroke:0">7,18</div>
<svg class="a" style="left:437px;top:366px" width="7" height="12" viewBox="0 0 7 12"><path d="M0 0 L7 6 L0 12 Z" fill="#2eb02e"/></svg>
<div class="t" style="left:429.0px;width:60px;text-align:right;top:367.00px;font-size:11px;line-height:11px;color:#1a1a1a;-webkit-text-stroke:0">7,30</div>
<svg class="a" style="left:496px;top:366px" width="7" height="12" viewBox="0 0 7 12"><path d="M0 0 L7 6 L0 12 Z" fill="#2eb02e"/></svg>
<div class="t" style="left:486.0px;width:60px;text-align:right;top:367.00px;font-size:11px;line-height:11px;color:#1a1a1a;-webkit-text-stroke:0">4,74</div>
<svg class="a" style="left:553px;top:366px" width="7" height="12" viewBox="0 0 7 12"><path d="M7 0 L0 6 L7 12 Z" fill="#d20404"/></svg>
<div class="t" style="left:543.0px;width:60px;text-align:right;top:367.00px;font-size:11px;line-height:11px;color:#1a1a1a;-webkit-text-stroke:0">5,09</div>
<svg class="a" style="left:610px;top:366px" width="7" height="12" viewBox="0 0 7 12"><path d="M0 0 L7 6 L0 12 Z" fill="#2eb02e"/></svg>
<div class="t" style="left:606.0px;width:60px;text-align:right;top:367.00px;font-size:11px;line-height:11px;color:#1a1a1a;-webkit-text-stroke:0">10,00</div>
<svg class="a" style="left:674px;top:366px" width="7" height="12" viewBox="0 0 7 12"><path d="M0 0 L7 6 L0 12 Z" fill="#2eb02e"/></svg>
<div class="a" style="left:69px;top:386px;width:99px;height:27px;background:#efefef"></div>
<div class="t" style="left:79.30px;top:395.00px;font-size:11px;line-height:11px;color:#1a1a1a;letter-spacing:0.221px;-webkit-text-stroke:0">Испания</div>
<svg class="a" style="left:145px;top:395px" width="10" height="8" viewBox="0 0 10 8"><path d="M0 0 H10 L9 2 H1 Z M2 3 H8 L7.6 5 H2.4 Z M3 6 H7 L5 8 Z" fill="#9a9ca2"/></svg>
<div class="t" style="left:145.6px;width:60px;text-align:right;top:395.00px;font-size:11px;line-height:11px;color:#1a1a1a;-webkit-text-stroke:0">0,86</div>
<div class="t" style="left:186.0px;width:60px;text-align:right;top:395.00px;font-size:11px;line-height:11px;color:#1a1a1a;-webkit-text-stroke:0">3,56</div>
<svg class="a" style="left:253px;top:394px" width="7" height="12" viewBox="0 0 7 12"><path d="M0 0 L7 6 L0 12 Z" fill="#2eb02e"/></svg>
<div class="t" style="left:249.0px;width:60px;text-align:right;top:395.00px;font-size:11px;line-height:11px;color:#1a1a1a;-webkit-text-stroke:0">4,02</div>
<svg class="a" style="left:317px;top:394px" width="7" height="12" viewBox="0 0 7 12"><path d="M0 0 L7 6 L0 12 Z" fill="#2eb02e"/></svg>
<div class="t" style="left:306.0px;width:60px;text-align:right;top:395.00px;font-size:11px;line-height:11px;color:#1a1a1a;-webkit-text-stroke:0">3,61</div>
<svg class="a" style="left:373px;top:394px" width="7" height="12" viewBox="0 0 7 12"><path d="M7 0 L0 6 L7 12 Z" fill="#d20404"/></svg>
<div class="t" style="left:369.0px;width:60px;text-align:right;top:395.00px;font-size:11px;line-height:11px;color:#1a1a1a;-webkit-text-stroke:0">3,27</div>
<svg class="a" style="left:437px;top:394px" width="7" height="12" viewBox="0 0 7 12"><path d="M7 0 L0 6 L7 12 Z" fill="#d20404"/></svg>
<div class="t" style="left:429.0px;width:60px;text-align:right;top:395.00px;font-size:11px;line-height:11px;color:#1a1a1a;-webkit-text-stroke:0">3,10</div>
<svg class="a" style="left:496px;top:394px" width="7" height="12" viewBox="0 0 7 12"><path d="M7 0 L0 6 L7 12 Z" fill="#d20404"/></svg>
<div class="t" style="left:486.0px;width:60px;text-align:right;top:395.00px;font-size:11px;line-height:11px;color:#1a1a1a;-webkit-text-stroke:0">2,70</div>
<svg class="a" style="left:553px;top:394px" width="7" height="12" viewBox="0 0 7 12"><path d="M7 0 L0 6 L7 12 Z" fill="#d20404"/></svg>
<div class="t" style="left:543.0px;width:60px;text-align:right;top:395.00px;font-size:11px;line-height:11px;color:#1a1a1a;-webkit-text-stroke:0">3,65</div>
<svg class="a" style="left:610px;top:394px" width="7" height="12" viewBox="0 0 7 12"><path d="M0 0 L7 6 L0 12 Z" fill="#2eb02e"/></svg>
<div class="t" style="left:606.0px;width:60px;text-align:right;top:395.00px;font-size:11px;line-height:11px;color:#1a1a1a;-webkit-text-stroke:0">5,05</div>
<svg class="a" style="left:674px;top:394px" width="7" height="12" viewBox="0 0 7 12"><path d="M0 0 L7 6 L0 12 Z" fill="#2eb02e"/></svg>
<div class="a" style="left:69px;top:273px;width:624px;height:1px;background:#6e6e72"></div>
<div class="a" style="left:69px;top:227px;width:100px;height:47px;background:#e5e7f4;border:2px solid #80868e;box-shadow:inset 1px 1px 0 #eef0fa"></div>
<div class="a" style="left:168px;top:273px;width:1px;height:141px;background:#6e6e72"></div>
<div class="a" style="left:166px;top:271px;width:5px;height:5px;background:#80868e"></div>
<div class="a" style="left:69px;top:421px;width:990px;height:1px;background:#e2e2e2"></div>
<div class="a" style="left:69px;top:765px;width:990px;height:1px;background:#e2e2e2"></div>
<svg class="a" style="left:0px;top:0px" width="1097" height="832" viewBox="0 0 1097 832">
<defs><linearGradient id="pg" x1="0" y1="0" x2="0" y2="1"><stop offset="0" stop-color="#dbdbdb"/><stop offset="0.45" stop-color="#e9e9e9"/><stop offset="0.85" stop-color="#f8f8f8"/><stop offset="1" stop-color="#fcfcfc"/></linearGradient></defs>
<rect x="115" y="449" width="936" height="255" fill="url(#pg)"/>
<path d="M115 485.5 H1051" stroke="#fff" stroke-width="1.3"/>
<path d="M115 522.5 H1051" stroke="#fff" stroke-width="1.3"/>
<path d="M115 558.5 H1051" stroke="#fff" stroke-width="1.3"/>
<path d="M115 595.5 H1051" stroke="#fff" stroke-width="1.3"/>
<path d="M115 631.5 H1051" stroke="#fff" stroke-width="1.3"/>
<path d="M115 668.5 H1051" stroke="#fff" stroke-width="1.3"/>
<path d="M166.5 449 V704" stroke="#fff" stroke-width="1.3"/>
<path d="M270.5 449 V704" stroke="#fff" stroke-width="1.3"/>
<path d="M374.5 449 V704" stroke="#fff" stroke-width="1.3"/>
<path d="M478.5 449 V704" stroke="#fff" stroke-width="1.3"/>
<path d="M582.5 449 V704" stroke="#fff" stroke-width="1.3"/>
<path d="M686.5 449 V704" stroke="#fff" stroke-width="1.3"/>
<path d="M790.5 449 V704" stroke="#fff" stroke-width="1.3"/>
<path d="M894.5 449 V704" stroke="#fff" stroke-width="1.3"/>
<path d="M998.5 449 V704" stroke="#fff" stroke-width="1.3"/>
<path d="M115 704.5 H1051" stroke="#d6d6d6" stroke-width="1"/>
<rect x="127.5" y="462.3" width="15" height="204.8" fill="#82b8b2" stroke="#5a9590" stroke-width="1"/>
<rect x="143.5" y="664.1" width="15" height="3.0" fill="#b0c83e" stroke="#8ca42a" stroke-width="1"/>
<rect x="159.5" y="650.1" width="15" height="17.0" fill="#eaac3a" stroke="#c8881c" stroke-width="1"/>
<rect x="175.5" y="572.7" width="15" height="94.4" fill="#62a0f8" stroke="#1a6ee8" stroke-width="1"/>
<rect x="191.5" y="652.4" width="15" height="14.7" fill="#ff4a2a" stroke="#d41010" stroke-width="1"/>
<rect x="231.5" y="488.7" width="15" height="178.4" fill="#82b8b2" stroke="#5a9590" stroke-width="1"/>
<rect x="247.5" y="624.9" width="15" height="42.2" fill="#b0c83e" stroke="#8ca42a" stroke-width="1"/>
<rect x="263.5" y="619.7" width="15" height="47.4" fill="#eaac3a" stroke="#c8881c" stroke-width="1"/>
<rect x="279.5" y="512.6" width="15" height="154.5" fill="#62a0f8" stroke="#1a6ee8" stroke-width="1"/>
<rect x="295.5" y="603.3" width="15" height="63.8" fill="#ff4a2a" stroke="#d41010" stroke-width="1"/>
<rect x="335.5" y="476.9" width="15" height="190.2" fill="#82b8b2" stroke="#5a9590" stroke-width="1"/>
<rect x="351.5" y="627.7" width="15" height="39.4" fill="#b0c83e" stroke="#8ca42a" stroke-width="1"/>
<rect x="367.5" y="606.7" width="15" height="60.4" fill="#eaac3a" stroke="#c8881c" stroke-width="1"/>
<rect x="383.5" y="519.7" width="15" height="147.4" fill="#62a0f8" stroke="#1a6ee8" stroke-width="1"/>
<rect x="399.5" y="594.9" width="15" height="72.2" fill="#ff4a2a" stroke="#d41010" stroke-width="1"/>
<rect x="439.5" y="525.7" width="15" height="141.4" fill="#82b8b2" stroke="#5a9590" stroke-width="1"/>
<rect x="455.5" y="633.5" width="15" height="33.6" fill="#b0c83e" stroke="#8ca42a" stroke-width="1"/>
<rect x="471.5" y="654.4" width="15" height="12.7" fill="#eaac3a" stroke="#c8881c" stroke-width="1"/>
<rect x="487.5" y="551.9" width="15" height="115.2" fill="#62a0f8" stroke="#1a6ee8" stroke-width="1"/>
<rect x="503.5" y="602.3" width="15" height="64.8" fill="#ff4a2a" stroke="#d41010" stroke-width="1"/>
<rect x="543.5" y="459.5" width="15" height="207.6" fill="#82b8b2" stroke="#5a9590" stroke-width="1"/>
<rect x="559.5" y="623.1" width="15" height="44.0" fill="#b0c83e" stroke="#8ca42a" stroke-width="1"/>
<rect x="575.5" y="646.1" width="15" height="21.0" fill="#eaac3a" stroke="#c8881c" stroke-width="1"/>
<rect x="591.5" y="537.3" width="15" height="129.8" fill="#62a0f8" stroke="#1a6ee8" stroke-width="1"/>
<rect x="607.5" y="608.5" width="15" height="58.6" fill="#ff4a2a" stroke="#d41010" stroke-width="1"/>
<rect x="647.5" y="539.9" width="15" height="127.2" fill="#82b8b2" stroke="#5a9590" stroke-width="1"/>
<rect x="663.5" y="613.5" width="15" height="53.6" fill="#b0c83e" stroke="#8ca42a" stroke-width="1"/>
<rect x="679.5" y="668.1" width="15" height="3.0" fill="#eaac3a" stroke="#c8881c" stroke-width="1"/>
<rect x="695.5" y="535.1" width="15" height="132.0" fill="#62a0f8" stroke="#1a6ee8" stroke-width="1"/>
<rect x="711.5" y="611.6" width="15" height="55.5" fill="#ff4a2a" stroke="#d41010" stroke-width="1"/>
<rect x="751.5" y="576.1" width="15" height="91.0" fill="#82b8b2" stroke="#5a9590" stroke-width="1"/>
<rect x="767.5" y="649.3" width="15" height="17.8" fill="#b0c83e" stroke="#8ca42a" stroke-width="1"/>
<rect x="799.5" y="581.8" width="15" height="85.3" fill="#62a0f8" stroke="#1a6ee8" stroke-width="1"/>
<rect x="815.5" y="618.9" width="15" height="48.2" fill="#ff4a2a" stroke="#d41010" stroke-width="1"/>
<rect x="855.5" y="581.9" width="15" height="85.2" fill="#82b8b2" stroke="#5a9590" stroke-width="1"/>
<rect x="871.5" y="634.4" width="15" height="32.7" fill="#b0c83e" stroke="#8ca42a" stroke-width="1"/>
<rect x="887.5" y="645.5" width="15" height="21.6" fill="#eaac3a" stroke="#c8881c" stroke-width="1"/>
<rect x="903.5" y="575.4" width="15" height="91.7" fill="#62a0f8" stroke="#1a6ee8" stroke-width="1"/>
<rect x="919.5" y="601.6" width="15" height="65.5" fill="#ff4a2a" stroke="#d41010" stroke-width="1"/>
<rect x="959.5" y="562.5" width="15" height="104.6" fill="#82b8b2" stroke="#5a9590" stroke-width="1"/>
<rect x="975.5" y="596.9" width="15" height="70.2" fill="#b0c83e" stroke="#8ca42a" stroke-width="1"/>
<rect x="991.5" y="609.6" width="15" height="57.5" fill="#eaac3a" stroke="#c8881c" stroke-width="1"/>
<rect x="1007.5" y="486.0" width="15" height="181.1" fill="#62a0f8" stroke="#1a6ee8" stroke-width="1"/>
<rect x="1023.5" y="576.1" width="15" height="91.0" fill="#ff4a2a" stroke="#d41010" stroke-width="1"/>
</svg>
<div class="t" style="left:44.0px;width:60px;text-align:right;top:444.00px;font-size:10.5px;line-height:10.5px;color:#767676;-webkit-text-stroke:0">12,00</div>
<div class="t" style="left:44.0px;width:60px;text-align:right;top:481.00px;font-size:10.5px;line-height:10.5px;color:#767676;-webkit-text-stroke:0">10,00</div>
<div class="t" style="left:44.0px;width:60px;text-align:right;top:517.00px;font-size:10.5px;line-height:10.5px;color:#767676;-webkit-text-stroke:0">8,00</div>
<div class="t" style="left:44.0px;width:60px;text-align:right;top:554.00px;font-size:10.5px;line-height:10.5px;color:#767676;-webkit-text-stroke:0">6,00</div>
<div class="t" style="left:44.0px;width:60px;text-align:right;top:590.00px;font-size:10.5px;line-height:10.5px;color:#767676;-webkit-text-stroke:0">4,00</div>
<div class="t" style="left:44.0px;width:60px;text-align:right;top:626.00px;font-size:10.5px;line-height:10.5px;color:#767676;-webkit-text-stroke:0">2,00</div>
<div class="t" style="left:44.0px;width:60px;text-align:right;top:663.00px;font-size:10.5px;line-height:10.5px;color:#767676;-webkit-text-stroke:0">0,00</div>
<div class="t" style="left:44.0px;width:60px;text-align:right;top:699.00px;font-size:10.5px;line-height:10.5px;color:#767676;-webkit-text-stroke:0">-2,00</div>
<div class="t" style="left:154.30px;top:714.00px;font-size:10.5px;line-height:10.5px;color:#767676;letter-spacing:0.010px;-webkit-text-stroke:0">2008</div>
<div class="t" style="left:258.30px;top:714.00px;font-size:10.5px;line-height:10.5px;color:#767676;letter-spacing:0.010px;-webkit-text-stroke:0">2007</div>
<div class="t" style="left:362.30px;top:714.00px;font-size:10.5px;line-height:10.5px;color:#767676;letter-spacing:0.010px;-webkit-text-stroke:0">2006</div>
<div class="t" style="left:466.30px;top:714.00px;font-size:10.5px;line-height:10.5px;color:#767676;letter-spacing:0.010px;-webkit-text-stroke:0">2005</div>
<div class="t" style="left:570.30px;top:714.00px;font-size:10.5px;line-height:10.5px;color:#767676;letter-spacing:0.010px;-webkit-text-stroke:0">2004</div>
<div class="t" style="left:674.30px;top:714.00px;font-size:10.5px;line-height:10.5px;color:#767676;letter-spacing:0.010px;-webkit-text-stroke:0">2003</div>
<div class="t" style="left:778.30px;top:714.00px;font-size:10.5px;line-height:10.5px;color:#767676;letter-spacing:0.010px;-webkit-text-stroke:0">2002</div>
<div class="t" style="left:882.30px;top:714.00px;font-size:10.5px;line-height:10.5px;color:#767676;letter-spacing:0.010px;-webkit-text-stroke:0">2001</div>
<div class="t" style="left:986.30px;top:714.00px;font-size:10.5px;line-height:10.5px;color:#767676;letter-spacing:0.010px;-webkit-text-stroke:0">2000</div>
<div class="a" style="left:400px;top:739px;width:13px;height:13px;background:#82b8b2;border:1px solid #5a9590"></div>
<div class="t" style="left:417.00px;top:740.00px;font-size:11px;line-height:11px;color:#8a8a8a;letter-spacing:-0.439px;-webkit-text-stroke:0">Беларусь</div>
<div class="a" style="left:470px;top:739px;width:13px;height:13px;background:#b0c83e;border:1px solid #8ca42a"></div>
<div class="t" style="left:487.00px;top:740.00px;font-size:11px;line-height:11px;color:#8a8a8a;letter-spacing:-0.153px;-webkit-text-stroke:0">Франция</div>
<div class="a" style="left:539px;top:739px;width:13px;height:13px;background:#eaac3a;border:1px solid #c8881c"></div>
<div class="t" style="left:556.00px;top:740.00px;font-size:11px;line-height:11px;color:#8a8a8a;letter-spacing:-0.239px;-webkit-text-stroke:0">Германия</div>
<div class="a" style="left:611px;top:739px;width:13px;height:13px;background:#62a0f8;border:1px solid #1a6ee8"></div>
<div class="t" style="left:628.00px;top:740.00px;font-size:11px;line-height:11px;color:#8a8a8a;letter-spacing:-0.345px;-webkit-text-stroke:0">Россия</div>
<div class="a" style="left:670px;top:739px;width:13px;height:13px;background:#ff4a2a;border:1px solid #d41010"></div>
<div class="t" style="left:687.00px;top:740.00px;font-size:11px;line-height:11px;color:#8a8a8a;letter-spacing:-0.379px;-webkit-text-stroke:0">Испания</div>
<div class="a" style="left:8px;top:803px;width:1081px;height:21px;background:#e6e6e6"></div>
<div class="t" style="left:13.10px;top:809.00px;font-size:11.5px;line-height:11.5px;color:#1e1e30;letter-spacing:0.108px">Ожидание</div>
<div class="t" style="left:946.30px;top:809.00px;font-size:11px;line-height:11px;color:#a8a8a8;letter-spacing:-0.973px">CAP</div>
<div class="a" style="left:976px;top:806px;width:1px;height:14px;background:#b4b4b4"></div>
<div class="t" style="left:988.30px;top:809.00px;font-size:11px;line-height:11px;color:#1e1e30;letter-spacing:0.050px">NUM</div>
<div class="a" style="left:1024px;top:806px;width:1px;height:14px;background:#b4b4b4"></div>
<div class="t" style="left:1036.50px;top:809.00px;font-size:11px;line-height:11px;color:#a8a8a8;letter-spacing:-1.386px">SCRL</div>
<div class="a" style="left:1071px;top:806px;width:1px;height:14px;background:#b4b4b4"></div>
<svg class="a" style="left:1078px;top:813px" width="11" height="11" viewBox="0 0 11 11"><path d="M11 1 L1 11 M11 5 L5 11 M11 9 L9 11" stroke="#c8c8c8" stroke-width="1"/></svg>
</body></html>
